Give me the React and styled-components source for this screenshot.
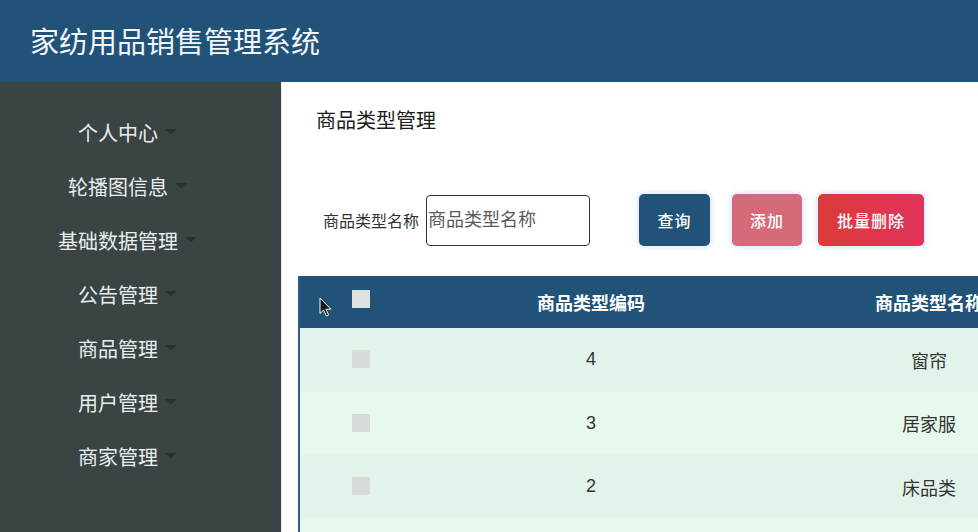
import React from 'react'
import styled, { createGlobalStyle } from 'styled-components'

const GlobalStyle = createGlobalStyle`
  html, body {
    margin: 0;
    padding: 0;
    height: 100%;
    overflow: hidden;
    font-family: "Liberation Sans", "Noto Sans CJK SC", sans-serif;
  }
  * { box-sizing: border-box; }
`

const menus = ['个人中心', '轮播图信息', '基础数据管理', '公告管理', '商品管理', '用户管理', '商家管理']

const rows = [
  { code: '4', name: '窗帘' },
  { code: '3', name: '居家服' },
  { code: '2', name: '床品类' },
]

const App = () => {
  return (
    <Page>
      <GlobalStyle />
      <TopBar>家纺用品销售管理系统</TopBar>
      <Body>
        <Sidebar>
          {menus.map(m => (
            <MenuItem key={m}>
              <span>{m}</span>
              <Caret />
            </MenuItem>
          ))}
        </Sidebar>
        <Main>
          <PageTitle>商品类型管理</PageTitle>
          <SearchBar>
            <Label>商品类型名称</Label>
            <Input placeholder="商品类型名称" />
            <Button $bg="#215278" $w={71} $ml={49}>查询</Button>
            <Button $bg="#d56b79" $w={70} $ml={22}>添加</Button>
            <Button $bg="linear-gradient(90deg, #dc3b39, #e0335c)" $w={106} $ml={16}>批量删除</Button>
          </SearchBar>
          <Table>
            <colgroup>
              <col style={{ width: 122 }} />
              <col style={{ width: 338 }} />
              <col style={{ width: 338 }} />
              <col style={{ width: 300 }} />
            </colgroup>
            <Head>
              <tr>
                <Th>
                  <Pointer viewBox="0 0 13 20">
                    <path d="M1 1 L1 16.5 L4.6 13 L7.4 19 L9.6 18 L6.9 12.2 L11.8 12.2 Z" fill="#111" stroke="#fff" strokeWidth="1" strokeLinejoin="round" />
                  </Pointer>
                  <Check $header />
                </Th>
                <Th>商品类型编码</Th>
                <Th>商品类型名称</Th>
                <Th>操作</Th>
              </tr>
            </Head>
            <tbody>
              {rows.map((r, i) => (
                <Row key={r.code} $odd={i % 2 === 0}>
                  <Td><Check /></Td>
                  <Td>{r.code}</Td>
                  <Td>{r.name}</Td>
                  <Td></Td>
                </Row>
              ))}
              <Row>
                <Td></Td>
                <Td></Td>
                <Td></Td>
                <Td></Td>
              </Row>
            </tbody>
          </Table>
        </Main>
      </Body>
    </Page>
  )
}

const Page = styled.div`
  width: 978px;
  height: 532px;
  display: flex;
  flex-direction: column;
  overflow: hidden;
`

const TopBar = styled.header`
  height: 82px;
  flex-shrink: 0;
  background: #215278;
  color: #f4f7fa;
  font-size: 29px;
  display: flex;
  align-items: center;
  padding-left: 30px;
  padding-bottom: 2px;
`

const Body = styled.div`
  flex: 1;
  display: flex;
  min-height: 0;
`

const Sidebar = styled.nav`
  width: 281px;
  flex-shrink: 0;
  background: #3a4444;
  padding: 23px 26px 0 0;
`

const MenuItem = styled.div`
  height: 54px;
  display: flex;
  align-items: center;
  justify-content: center;
  gap: 7px;
  font-size: 20px;
  color: #eaeeee;
  cursor: pointer;
`

const Caret = styled.i`
  width: 0;
  height: 0;
  border-left: 6px solid transparent;
  border-right: 6px solid transparent;
  border-top: 5px solid #283030;
  margin-top: -2px;
`

const Main = styled.main`
  flex: 1;
  min-width: 0;
  background: #fff;
  overflow: hidden;
  border-left: 1px solid #eceeee;
`

const PageTitle = styled.h2`
  margin: 0;
  padding: 27px 0 0 34px;
  font-size: 20px;
  line-height: 24px;
  font-weight: 400;
  color: #1c1c1c;
`

const SearchBar = styled.div`
  display: flex;
  align-items: center;
  margin-top: 61px;
  padding-left: 41px;
  height: 52px;
`

const Label = styled.label`
  font-size: 16px;
  color: #333;
  margin-right: 7px;
`

const Input = styled.input`
  width: 164px;
  height: 51px;
  border: 1px solid #333;
  border-radius: 4px;
  padding: 0 0 0 1px;
  font-size: 18px;
  font-family: inherit;
  outline: none;
  &::placeholder { color: #5a5a5a; }
`

const Button = styled.button`
  width: ${p => p.$w}px;
  height: 52px;
  margin-left: ${p => p.$ml}px;
  border: none;
  border-radius: 5px;
  background: ${p => p.$bg};
  color: #fff;
  font-size: 16px;
  font-family: inherit;
  font-weight: 500;
  letter-spacing: 1px;
  box-shadow: 0 0 6px rgba(120, 170, 255, 0.45);
  cursor: pointer;
`

const Table = styled.table`
  margin: 30px 0 0 16px;
  width: 1100px;
  table-layout: fixed;
  border-collapse: separate;
  border-spacing: 0;
  border-left: 2px solid #2b5c8a;
`

const Head = styled.thead`
  background: #215278;
`

const Th = styled.th`
  position: relative;
  height: 52px;
  background: #215278;
  color: #fff;
  font-size: 18px;
  font-weight: bold;
  text-align: center;
  padding: 0;
  border: none;
`

const Row = styled.tr`
  background: ${p => (p.$odd ? '#e2f3e9' : '#e7f8ed')};
`

const Td = styled.td`
  height: 63.5px;
  text-align: center;
  font-size: 18px;
  color: #333;
  padding: 0;
`

const Check = styled.span`
  display: inline-block;
  vertical-align: middle;
  width: 18px;
  height: 18px;
  background: ${p => (p.$header ? '#dfe1e1' : '#d8dbdb')};
  margin-top: ${p => (p.$header ? '-8px' : '-3px')};
`

const Pointer = styled.svg`
  position: absolute;
  left: 19px;
  top: 21px;
  width: 13px;
  height: 20px;
`

export default App
